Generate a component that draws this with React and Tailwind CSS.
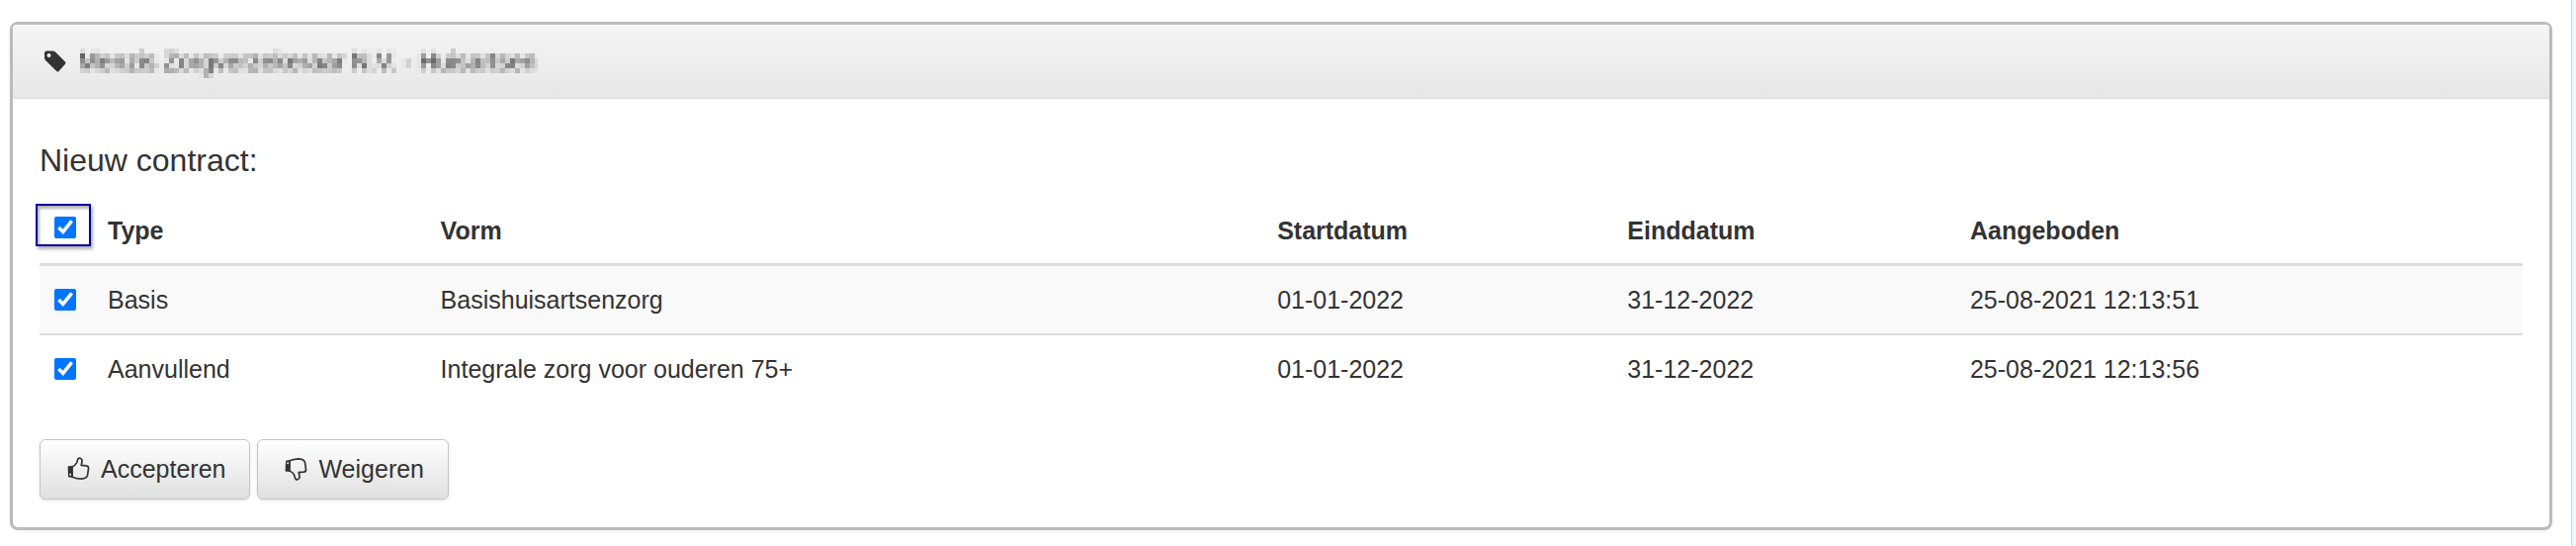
import { useState } from 'react';

const contracts = [
  { id: 1, type: 'Basis', vorm: 'Basishuisartsenzorg', start: '01-01-2022', eind: '31-12-2022', aangeboden: '25-08-2021 12:13:51' },
  { id: 2, type: 'Aanvullend', vorm: 'Integrale zorg voor ouderen 75+', start: '01-01-2022', eind: '31-12-2022', aangeboden: '25-08-2021 12:13:56' },
];

const TagIcon = () => (
  <svg viewBox="0 0 22 22" className="w-[22px] h-[22px] shrink-0" fill="currentColor" aria-hidden="true">
    <path fillRule="evenodd" d="M0 2.5Q0 .5 2 .5H8.5Q10 .5 11 1.5L21 11.5Q22 12.7 21 13.8L14.5 21Q13.5 22 12.3 21L1.5 10.5Q0 9 0 7.5ZM4.5 3A2 2 0 1 0 4.5 7A2 2 0 1 0 4.5 3Z" />
  </svg>
);

const ThumbIcon = ({ down }) => (
  <svg viewBox="0 0 24 24" className={down ? 'w-6 h-6 -scale-y-100' : 'w-6 h-6'} aria-hidden="true">
    <path fill="currentColor" fillRule="evenodd" d="M1.2 9.3L5.5 9V21L2 20.6Q1 20.4 1 19.5L.6 10Q.6 9.4 1.2 9.3ZM3.2 16.8A1 1 0 1 0 3.2 18.8A1 1 0 1 0 3.2 16.8Z" />
    <path
      fill="none"
      stroke="currentColor"
      strokeWidth="1.7"
      strokeLinejoin="round"
      d="M5 10Q8.3 8.5 9.5 6L10.7 2.4Q11.3 .8 13.1 1.2Q15.5 1.8 15 4.8L14.2 8.3L19.3 8.8Q21.8 9.2 21.5 11.7L20.5 18.7Q19.5 21.7 14.5 22.2Q10 22.2 5 20.2Z"
    />
  </svg>
);

// Keeps one sample per cell and grows it to fill the cell
const PixelateFilter = () => (
  <svg width="0" height="0" className="absolute" aria-hidden="true">
    <filter id="pixelate" x="0" y="0" width="100%" height="100%">
      <feGaussianBlur in="SourceGraphic" stdDeviation="1.5" result="soft" />
      <feFlood x="4" y="2" width="1" height="1" floodColor="#000" />
      <feComposite x="2" y="0" width="5" height="5" />
      <feTile result="grid" />
      <feComposite in="soft" in2="grid" operator="in" />
      <feMorphology operator="dilate" radius="2" />
    </filter>
  </svg>
);

const Checkbox = (props) => (
  <input type="checkbox" className="block w-[22px] h-[22px] accent-[#0075ff]" {...props} />
);

const Button = ({ children }) => (
  <button
    type="button"
    className="flex items-center gap-[10px] h-[61px] pl-[27px] pr-6 rounded-md border border-[#c5c5c5] bg-linear-to-b from-white to-[#e0e0e0] shadow-[0_1px_3px_rgba(0,0,0,0.12)] cursor-pointer"
  >
    {children}
  </button>
);

const App = () => {
  const [selected, setSelected] = useState(contracts.map((c) => c.id));
  const allSelected = selected.length === contracts.length;

  const toggle = (id) =>
    setSelected((prev) => (prev.includes(id) ? prev.filter((x) => x !== id) : [...prev, id]));

  return (
    <div className="flex min-h-screen bg-white font-['Liberation_Sans',Arial,sans-serif] text-[25px] leading-9 text-[#333]">
      <PixelateFilter />
      <main className="flex-1 pl-[10px] pr-[19px] pt-[22px] pb-4">
        <section className="rounded-lg border-3 border-[#bbb] shadow-[0_1px_4px_rgba(0,0,0,0.06)]">
          <header className="flex items-center gap-3 h-[75px] px-8 rounded-t-sm border-b border-[#ddd] bg-linear-to-b from-[#f5f5f5] to-[#e7e7e7] shadow-[inset_0_1px_0_#fff]">
            <TagIcon />
            <h1 className="[filter:url(#pixelate)]">Menzis Zorgverzekeraar N.V. - Huisartsen</h1>
          </header>

          <div className="px-[27px] pt-10 pb-7">
            <h2 className="text-[32px] leading-11">Nieuw contract:</h2>

            <table className="w-full mt-4 table-fixed text-left">
              <colgroup>
                <col className="w-[60px]" />
                <col className="w-[13.4%]" />
                <col className="w-[33.7%]" />
                <col className="w-[14.1%]" />
                <col className="w-[13.8%]" />
                <col />
              </colgroup>
              <thead>
                <tr className="border-b-3 border-[#ddd]">
                  <th className="relative pl-[15px] pt-[19px] align-top">
                    <span className="absolute -left-1 top-1.5 w-14 h-[43px] border-2 border-[#0000a0] shadow-[2px_3px_3px_rgba(0,0,0,0.3),inset_2px_3px_3px_rgba(0,0,0,0.3)] pointer-events-none" />
                    <Checkbox
                      aria-label="Alles selecteren"
                      checked={allSelected}
                      onChange={() => setSelected(allSelected ? [] : contracts.map((c) => c.id))}
                    />
                  </th>
                  <th className="pl-[9px] py-[15px]">Type</th>
                  <th className="pl-[9px] py-[15px]">Vorm</th>
                  <th className="pl-[9px] py-[15px]">Startdatum</th>
                  <th className="pl-[9px] py-[15px]">Einddatum</th>
                  <th className="pl-[9px] py-[15px]">Aangeboden</th>
                </tr>
              </thead>
              <tbody>
                {contracts.map((c) => (
                  <tr key={c.id} className="h-[70px] odd:bg-[#f9f9f9] not-last:border-b-2 border-[#ddd]">
                    <td className="pl-[15px]">
                      <Checkbox aria-label={c.type} checked={selected.includes(c.id)} onChange={() => toggle(c.id)} />
                    </td>
                    <td className="pl-[9px]">{c.type}</td>
                    <td className="pl-[9px]">{c.vorm}</td>
                    <td className="pl-[9px]">{c.start}</td>
                    <td className="pl-[9px]">{c.eind}</td>
                    <td className="pl-[9px]">{c.aangeboden}</td>
                  </tr>
                ))}
              </tbody>
            </table>

            <div className="flex gap-[7px] mt-9">
              <Button><ThumbIcon /> Accepteren</Button>
              <Button><ThumbIcon down /> Weigeren</Button>
            </div>
          </div>
        </section>
      </main>
      <aside className="w-[5px] border-l border-[#ccd6e2] bg-[#eff5fc]" />
    </div>
  );
};

export default App;
